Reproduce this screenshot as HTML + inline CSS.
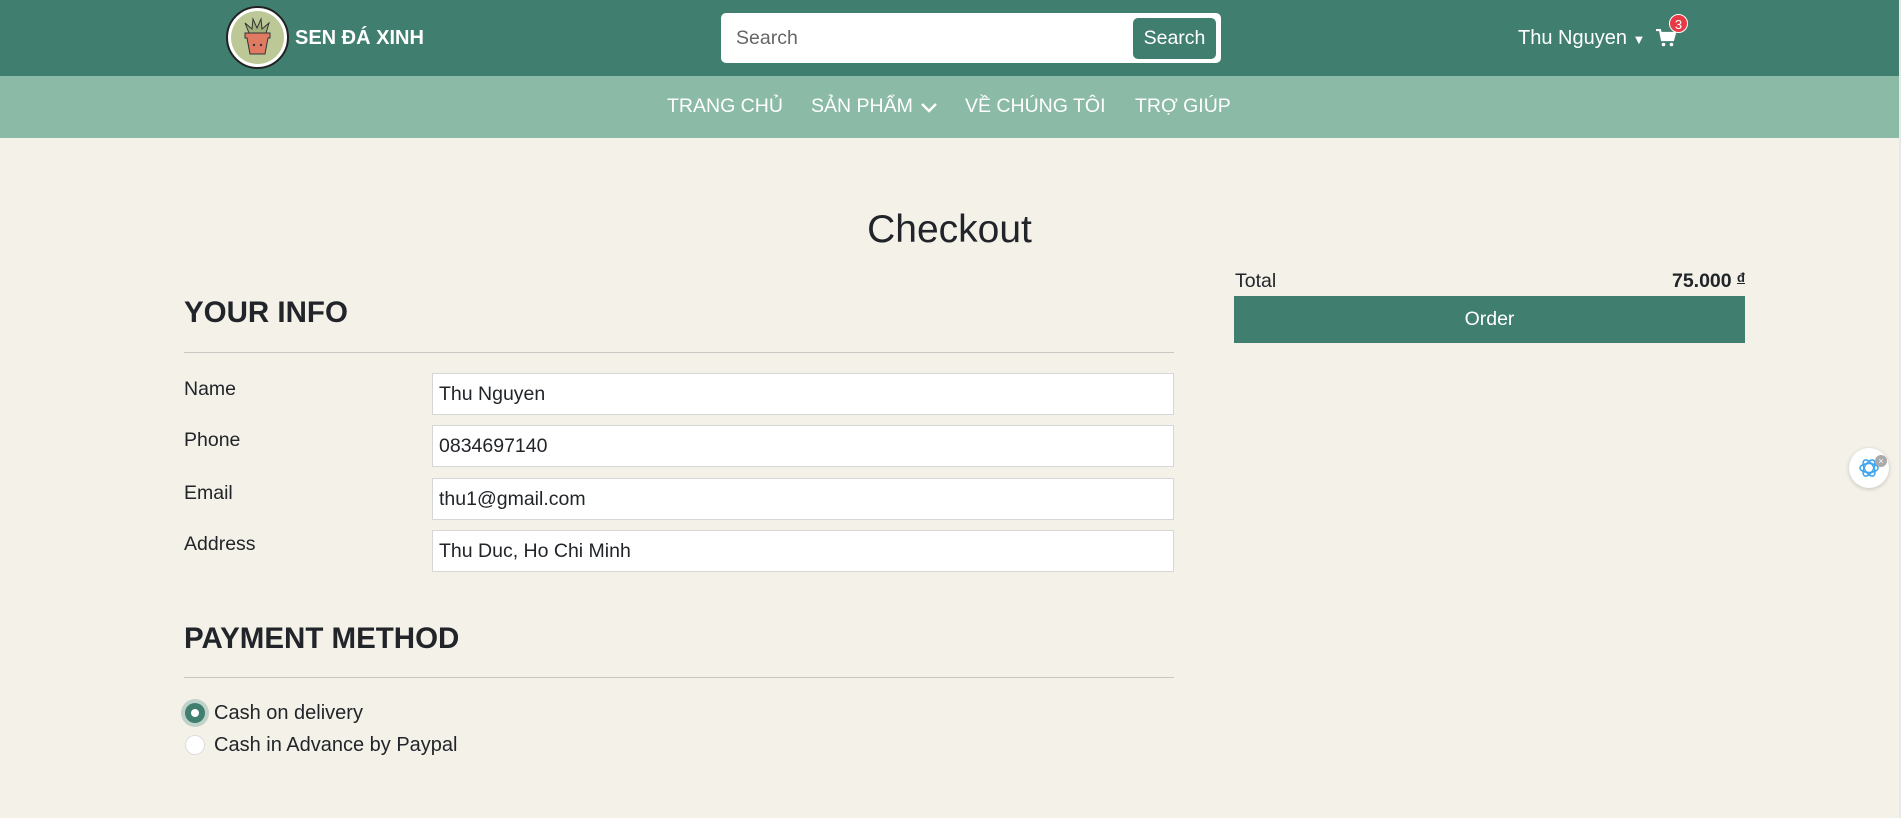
<!DOCTYPE html>
<html><head><meta charset="utf-8">
<style>
*{box-sizing:border-box;margin:0;padding:0}
body{width:1901px;height:818px;overflow:hidden;background:#f4f1e9;font-family:"Liberation Sans",Arial,sans-serif;color:#212529;position:relative}
.hdr{position:absolute;left:0;top:0;width:1899px;height:76px;background:#407e6f}
.nav{position:absolute;left:0;top:76px;width:1899px;height:62px;background:#8bbaa7}
.sb{position:absolute;left:1899px;top:0;width:2px;height:818px;background:#e8e8e8}
.abs{position:absolute}
.logo{left:226px;top:6px;width:63px;height:63px;border-radius:50%;background:#fff;border:2px solid #222}
.logo .in{position:absolute;left:3px;top:3px;width:53px;height:53px;border-radius:50%;background:#bdc897}
.brand{left:295px;top:27px;color:#fff;font-weight:bold;font-size:20px}
.search{left:721px;top:13px;width:500px;height:50px;background:#fff;border-radius:5px}
.search span{position:absolute;left:15px;top:14px;font-size:19.5px;color:#666}
.sbtn{left:1133px;top:18px;width:83px;height:41px;background:#407e6f;border-radius:5px;color:#fff;font-size:19.5px;text-align:center;line-height:41px}
.user{left:1518px;top:27px;color:#fff;font-size:20px}
.badge{left:1669px;top:14px;width:19px;height:19px;border-radius:50%;background:#e83a45;color:#fff;font-size:13px;text-align:center;line-height:19px;border:1px solid #fff}
.navi{top:95px;color:#fff;font-size:19.5px}
h1{position:absolute;left:0;width:1899px;top:208px;text-align:center;font-weight:normal;font-size:39px;color:#212529}
h2{position:absolute;left:184px;font-size:29.5px;font-weight:bold;color:#212529}
.hr{position:absolute;left:184px;width:990px;height:1px;background:#c7c6c2}
.lbl{position:absolute;left:184px;font-size:19.5px}
.inp{position:absolute;left:432px;width:742px;height:42px;background:#fff;border:1px solid #d6d6d6;font-size:19.5px;padding:10px 6px;line-height:20px}
.radio{position:absolute;left:185px;width:20px;height:20px;border-radius:50%;background:#fff;border:1px solid #ddd}
.rl{position:absolute;left:214px;font-size:20px}
</style></head><body>
<div class="hdr"></div><div class="nav"></div><div class="sb"></div>
<div class="abs logo"><div class="in">
<svg width="53" height="53" viewBox="0 0 53 53"><path d="M18 22 L14 12 L21 18 L22 8 L26 17 L30 8 L31 18 L38 12 L35 22Z" fill="#9fb07a" stroke="#333" stroke-width="1"/><path d="M14 22 H39 V27 H37 L34 43 H19 L16 27 H14Z" fill="#e07b63" stroke="#333" stroke-width="1"/><circle cx="23" cy="34" r="1.2" fill="#333"/><circle cx="30" cy="34" r="1.2" fill="#333"/></svg></div></div>
<div class="abs brand">SEN ĐÁ XINH</div>
<div class="abs search"><span>Search</span></div>
<div class="abs sbtn">Search</div>
<div class="abs user">Thu Nguyen <span style="font-size:13px">▼</span></div>
<svg class="abs" style="left:1656px;top:29px" width="20" height="18" viewBox="0 0 20 18"><path d="M0 1 H4 L6 11 H17 L19 4 H5" fill="none" stroke="#fff" stroke-width="2.2"/><rect x="5" y="4" width="13" height="6" fill="#fff"/><circle cx="7.5" cy="15.5" r="1.8" fill="#fff"/><circle cx="15.5" cy="15.5" r="1.8" fill="#fff"/></svg>
<div class="abs badge">3</div>
<div class="abs navi" style="left:667px">TRANG CHỦ</div>
<div class="abs navi" style="left:811px">SẢN PHẨM</div>
<svg class="abs" style="left:920px;top:102px" width="18" height="12" viewBox="0 0 18 12"><path d="M2 2 L9 9 L16 2" fill="none" stroke="#fff" stroke-width="2.5"/></svg>
<div class="abs navi" style="left:965px">VỀ CHÚNG TÔI</div>
<div class="abs navi" style="left:1135px">TRỢ GIÚP</div>

<h1>Checkout</h1>
<h2 style="top:296px">YOUR INFO</h2>
<div class="hr" style="top:352px"></div>
<div class="lbl" style="top:378px">Name</div>
<div class="lbl" style="top:429px">Phone</div>
<div class="lbl" style="top:482px">Email</div>
<div class="lbl" style="top:533px">Address</div>
<div class="inp" style="top:373px">Thu Nguyen</div>
<div class="inp" style="top:425px">0834697140</div>
<div class="inp" style="top:478px">thu1@gmail.com</div>
<div class="inp" style="top:530px">Thu Duc, Ho Chi Minh</div>
<h2 style="top:622px">PAYMENT METHOD</h2>
<div class="hr" style="top:677px"></div>
<div class="radio" style="left:181px;top:699px;width:28px;height:28px;background:#c0d3ca;border:none"></div>
<div class="radio" style="top:703px;background:#407e6f;border:none"></div>
<div class="radio" style="left:191px;top:709px;width:8px;height:8px;border:none"></div>
<div class="rl" style="top:702px">Cash on delivery</div>
<div class="radio" style="top:735px"></div>
<div class="rl" style="top:734px">Cash in Advance by Paypal</div>

<div class="abs" style="left:1235px;top:270px;font-size:19.5px">Total</div>
<div class="abs" style="left:1560px;width:185px;top:270px;font-size:19.5px;font-weight:bold;text-align:right">75.000 <span style="font-size:13px;vertical-align:top;text-decoration:underline">đ</span></div>
<div class="abs" style="left:1234px;top:296px;width:511px;height:47px;background:#407e6f;color:#fff;font-size:19.5px;text-align:center;line-height:47px">Order</div>

<div class="abs" style="left:1849px;top:448px;width:40px;height:40px;border-radius:50%;background:#fff;box-shadow:0 1px 4px rgba(0,0,0,.2)"></div>
<svg class="abs" style="left:1858px;top:457px" width="22" height="22" viewBox="0 0 22 22"><g fill="none" stroke="#3fa4f0" stroke-width="1.5"><ellipse cx="11" cy="11" rx="9" ry="4.5"/><ellipse cx="11" cy="11" rx="9" ry="4.5" transform="rotate(60 11 11)"/><ellipse cx="11" cy="11" rx="9" ry="4.5" transform="rotate(120 11 11)"/></g></svg>
<div class="abs" style="left:1875px;top:455px;width:12px;height:12px;border-radius:50%;background:#aaa;color:#fff;font-size:9px;text-align:center;line-height:12px">×</div>
</body></html>
